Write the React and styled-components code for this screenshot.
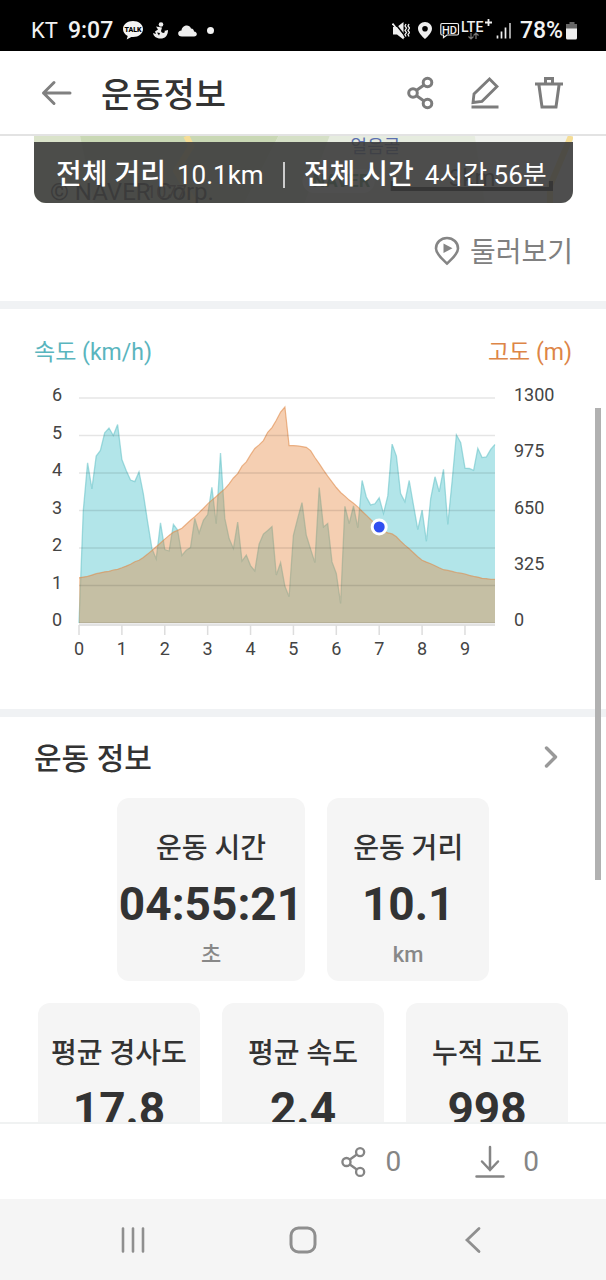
import React from 'react';
import styled, { createGlobalStyle } from 'styled-components';

const GlobalStyle = createGlobalStyle`
  * {
    box-sizing: border-box;
  }
  body {
    margin: 0;
    background: #fff;
    color: #333;
    font-family: Roboto, "Noto Sans CJK KR", sans-serif;
  }
  button {
    border: 0;
    padding: 0;
    background: none;
    color: inherit;
    font: inherit;
  }
  h1, h2, h3, p {
    margin: 0;
  }
  svg {
    display: block;
  }
`;

// one value for every 0.1 km
const speed = [
  0, 3, 4.27, 3.58, 4.45, 4.6, 5.07, 5.2, 5, 5.29,
  4.36, 4.07, 3.81, 3.77, 4.03, 3.45, 2.7, 1.99, 1.71, 2.67,
  1.96, 1.92, 2.63, 2.48, 1.8, 1.94, 2.01, 2.79, 2.4, 2.74,
  2.89, 3.62, 2.65, 4.53, 2.79, 2.25, 1.99, 2.69, 1.65, 1.81,
  1.53, 1.39, 2.1, 2.37, 2.47, 2.57, 1.28, 1.61, 0.98, 0.7,
  2.34, 2.79, 3.21, 2.34, 1.97, 1.61, 3.61, 2.56, 2.65, 1.63,
  1.32, 0.52, 3.11, 2.65, 3.12, 2.54, 3.8, 3.36, 3.15, 3.18,
  3.34, 2.92, 3.39, 4.77, 4.45, 3.45, 3.23, 3.8, 3.14, 2.49,
  3.01, 2.18, 3.32, 3.9, 3.5, 4.1, 2.63, 3.78, 5.02, 4.81,
  4.13, 4.12, 4.07, 4.66, 4.41, 4.43, 4.63, 4.76,
];

const altitude = [
  261, 265, 269, 277, 285, 290, 296, 298, 306, 310,
  319, 329, 340, 354, 363, 379, 398, 419, 440, 462,
  485, 506, 525, 535, 548, 571, 594, 615, 638, 663,
  688, 710, 731, 754, 775, 804, 838, 863, 906, 931,
  971, 1008, 1029, 1054, 1102, 1129, 1171, 1219, 1248, 1025,
  1025, 1023, 1019, 1015, 996, 956, 921, 883, 848, 815,
  783, 754, 733, 710, 692, 671, 646, 623, 598, 575,
  554, 529, 521, 515, 498, 473, 450, 429, 406, 383,
  363, 352, 342, 331, 319, 308, 304, 298, 292, 288,
  283, 275, 269, 265, 258, 256, 252, 252,
];

const LEFT = 45;
const RIGHT = 461;
const TOP = 14;
const BOTTOM = 239;
const KM = (RIGHT - LEFT) / 9.7;

const toPoints = (data, max) =>
  data
    .map((v, i) => `${(LEFT + i * 0.1 * KM).toFixed(1)},${(BOTTOM - (v / max) * (BOTTOM - TOP)).toFixed(1)}`)
    .join(' ');

const Chart = () => {
  const speedLine = toPoints(speed, 6);
  const altitudeLine = toPoints(altitude, 1300);
  const base = `${RIGHT},${BOTTOM} ${LEFT},${BOTTOM}`;
  const step = (BOTTOM - TOP) / 6;

  return (
    <ChartSvg viewBox="0 0 538 290" role="img" aria-label="속도, 고도">
      <polygon points={`${speedLine} ${base}`} fill="#65cbd3" fillOpacity="0.5" />
      <polyline points={speedLine} fill="none" stroke="#6cc5c9" strokeOpacity="0.6" strokeWidth="1.3" />
      <polygon points={`${altitudeLine} ${base}`} fill="#e58134" fillOpacity="0.38" />
      <polyline points={altitudeLine} fill="none" stroke="#e08a4a" strokeOpacity="0.6" strokeWidth="1.2" />
      {[0, 1, 2, 3, 4, 5, 6].map(n => (
        <g key={n}>
          <line x1={LEFT} x2={RIGHT} y1={BOTTOM - n * step} y2={BOTTOM - n * step} stroke="#000" strokeOpacity="0.1" strokeWidth="1.5" />
          <AxisText x="28" y={BOTTOM - n * step + 3} textAnchor="end">{n}</AxisText>
        </g>
      ))}
      <line x1={LEFT} x2={RIGHT} y1="241" y2="241" stroke="#e2e2e2" strokeWidth="2" />
      {[0, 1, 2, 3, 4, 5, 6, 7, 8, 9].map(n => (
        <g key={n}>
          <line x1={LEFT + n * KM} x2={LEFT + n * KM} y1="241" y2="251" stroke="#ddd" strokeWidth="1.5" />
          <AxisText x={LEFT + n * KM} y="271" textAnchor="middle">{n}</AxisText>
        </g>
      ))}
      {[0, 325, 650, 975, 1300].map((n, i) => (
        <AxisText key={n} x="480" y={BOTTOM - i * step * 1.5 + 3}>{n}</AxisText>
      ))}
      <circle cx={LEFT + 7 * KM} cy="143" r="8.5" fill="#fff" />
      <circle cx={LEFT + 7 * KM} cy="143" r="5.5" fill="#304ff0" />
    </ChartSvg>
  );
};

const ShareIcon = ({ w = 28, h = 34, sw = 3 }) => (
  <svg width={w} height={h} viewBox="0 0 28 34" fill="none" stroke="currentColor" strokeWidth={sw}>
    <circle cx="6" cy="17" r="4.3" />
    <circle cx="20.5" cy="6.5" r="4.3" />
    <circle cx="20.5" cy="27.5" r="4.3" />
    <path d="M9.600 14.300 17 9M9.600 19.700 17 25" />
  </svg>
);

const BackIcon = () => (
  <svg width="32" height="26" viewBox="0 0 32 26" fill="none" stroke="#808080" strokeWidth="3" strokeLinecap="round" strokeLinejoin="round">
    <path d="M2.500 13H29M13 2.500 2.500 13 13 23.500" />
  </svg>
);

const PencilIcon = () => (
  <svg width="28" height="34" viewBox="0 0 28 34" fill="none" stroke="currentColor" strokeWidth="2.8">
    <path d="M2 26.500 3 18 18.500 3 26 10.500 11 25.300ZM0.500 31H27.500" />
  </svg>
);

const TrashIcon = () => (
  <svg width="28" height="34" viewBox="0 0 28 34" fill="none" stroke="currentColor" strokeWidth="3">
    <path d="M0 8H28M3.800 8 7 31H21L24.200 8M10.500 7.500V2.500H17.500V7.500" />
  </svg>
);

const TalkIcon = () => (
  <svg width="20" height="19" viewBox="0 0 20 19">
    <path d="M10 0C4.400 0 0 3.500 0 8c0 3 1.900 5.500 4.700 6.900L3.700 18.500 8.300 15.900C14.700 16.800 20 13 20 8 20 3.500 15.600 0 10 0Z" fill="#f4f4f4" />
    <TalkText x="10" y="10.5" textAnchor="middle">TALK</TalkText>
  </svg>
);

const SwimIcon = () => (
  <svg width="15" height="17" viewBox="0 0 15 17" fill="#eee">
    <circle cx="8" cy="2.5" r="2.3" />
    <path d="M3 4.500 9 5.500 8 9C9 12 12 11 12 9.500L11 9 15 8C15 14 12 16.500 7.500 16.500 3 16.500 0.500 14 0 11L3 12 2 9.500 5 7.500Z" />
    <path d="M4 10.500 7 11 6 13.500Z" fill="#000" />
  </svg>
);

const CloudIcon = () => (
  <svg width="19" height="12" viewBox="0 0 19 12" fill="#eee">
    <path d="M4 11.500C-1 11.500-1 5.500 3.500 5.500 4 .5 11 -1.500 13 3.500 15 3.500 16 5 16 6.500 20 7 19.500 11.500 16 11.500Z" />
  </svg>
);

const MuteIcon = () => (
  <svg width="18" height="18" viewBox="0 0 18 18" fill="#eee">
    <path d="M1 5H5L11.500 0V17.500L5 12.500H1Z" />
    <path d="M2 0 13 14" stroke="#000" strokeWidth="1.5" />
    <path d="M0.500 1.500 12 16" stroke="#eee" strokeWidth="1.8" />
    <path d="M14 2l-1 2 1.500 2-1.500 2.500 1.500 2-1.500 2 1 2M17 2 16 4 17.500 6 16 8.500 17.500 10.500 16 12.500 17 14.500" fill="none" stroke="#eee" strokeWidth="1.3" />
  </svg>
);

const PinIcon = () => (
  <svg width="14" height="17" viewBox="0 0 14 17" fill="#eee">
    <path fillRule="evenodd" d="M7 0C3 0 0 3 0 6.700 0 11 7 17 7 17S14 11 14 6.700C14 3 11 0 7 0ZM7 4a2.800 2.800 0 1 1 0 5.600A2.800 2.800 0 0 1 7 4Z" />
  </svg>
);

const NetworkIcon = () => (
  <svg width="72" height="24" viewBox="0 0 72 24" fill="none" stroke="#eee" strokeWidth="1.2">
    <path d="M2 4.500H17Q18.500 4.500 18.500 6V14.500Q18.500 16 17 16H7L3.500 18.500V16H2Q.8 16 .8 14.500V6Q.8 4.500 2 4.500Z" />
    <StatusGlyph x="9.5" y="14.5" textAnchor="middle" $size={11}>HD</StatusGlyph>
    <StatusGlyph x="21" y="12.5" $size={14}>LTE</StatusGlyph>
    <path d="M48.500 0V7M45 3.500H52" strokeWidth="1.8" />
    <path d="M31 14V20M28.500 17.500 31 20 33.500 17.500M36 20V14M33.500 16.500 36 14 38.500 16.500" stroke="#777" />
    <path d="M57.500 16.500V19.500M61.500 12.500V19.500M65.500 8.500V19.500" strokeWidth="1.7" />
    <path d="M70 4V19.500" strokeWidth="1.7" stroke="#bbb" />
  </svg>
);

const BatteryIcon = () => (
  <svg width="12" height="18" viewBox="0 0 12 18">
    <path d="M3.500 0H8.500V2H11V8H0V2H3.500Z" fill="#666" />
    <path d="M0 6.500H11V16Q11 17.500 9.500 17.500H1.500Q0 17.500 0 16Z" fill="#eee" />
  </svg>
);

const TourIcon = () => (
  <svg width="26" height="30" viewBox="0 0 26 30" fill="none" stroke="#858585" strokeWidth="2.6">
    <path d="M13 27.500C9 23.500 2 18.500 2 12.500 2 6.500 6.800 2 13 2S24 6.500 24 12.500C24 18.500 17 23.500 13 27.500Z" />
    <path d="M9.500 7.500V17L18.500 12.200Z" fill="#858585" stroke="none" />
  </svg>
);

const ChevronIcon = () => (
  <svg width="14" height="24" viewBox="0 0 14 24" fill="none" stroke="#999" strokeWidth="3.4" strokeLinecap="round" strokeLinejoin="round">
    <path d="M2.500 3 11.500 12 2.500 21" />
  </svg>
);

const DownloadIcon = () => (
  <svg width="30" height="34" viewBox="0 0 30 34" fill="none" stroke="currentColor" strokeWidth="2.5" strokeLinecap="round">
    <path d="M15 2V24.500M7 16.500 15 25 23 16.500M1.500 31.500H28.500" />
  </svg>
);

const MapImage = () => (
  <MapSvg viewBox="0 0 538 67" preserveAspectRatio="xMinYMin slice" aria-hidden="true">
    <path d="M0 0H538V67H0Z" fill="#e6ecdf" />
    <path d="M0 0H46L60 67H0Z" fill="#dae3ca" />
    <path d="M46 0H244L210 67H60Z" fill="#c9d8b4" />
    <path d="M244 0H295L270 67H210Z" fill="#d5e0c6" />
    <path d="M440 0H538V67H450Z" fill="#f0f2ee" />
    <path d="M152 0 157 10 142 35 160 67M536 0 515 50V67" fill="none" stroke="#f5dd96" strokeWidth="6" />
    <MapText x="316" y="17" $size={18} $color="#5b6fae">얼음골</MapText>
    <MapText x="16" y="64" $size={24} $color="#333">© NAVER Corp.</MapText>
    <MapText x="112" y="62" $size={18} $color="#655">1077</MapText>
    <rect x="268" y="33" width="72" height="24" rx="12" fill="#fff" />
    <MapText x="278" y="51" $size={18} $color="#4a9060" $bold>NAVER</MapText>
    <MapText x="414" y="50" $size={24} $color="#333">3km</MapText>
    <path d="M358 45V53H516V45" fill="none" stroke="#000" strokeWidth="4" />
  </MapSvg>
);

const StatCard = ({ title, value, unit }) => (
  <Card>
    <CardTitle>{title}</CardTitle>
    <CardValue>{value}</CardValue>
    <CardUnit>{unit}</CardUnit>
  </Card>
);

const App = () => (
  <Phone>
    <GlobalStyle />
    <StatusBar>
      <StatusGroup $gap={10}>
        <Carrier>KT</Carrier>
        <Clock>9:07</Clock>
        <TalkIcon />
        <SwimIcon />
        <CloudIcon />
        <Dot />
      </StatusGroup>
      <StatusGroup $gap={8}>
        <MuteIcon />
        <PinIcon />
        <NetworkIcon />
        <BatteryGroup>
          <Clock>78%</Clock>
          <BatteryIcon />
        </BatteryGroup>
      </StatusGroup>
    </StatusBar>

    <Header>
      <IconButton aria-label="뒤로"><BackIcon /></IconButton>
      <PageTitle>운동정보</PageTitle>
      <HeaderActions>
        <IconButton aria-label="공유"><ShareIcon /></IconButton>
        <IconButton aria-label="편집"><PencilIcon /></IconButton>
        <IconButton aria-label="삭제"><TrashIcon /></IconButton>
      </HeaderActions>
    </Header>

    <Content>
      <MapBox>
        <MapImage />
        <Summary>
          <SummaryLabel>전체 거리</SummaryLabel>
          <SummaryValue>10.1km</SummaryValue>
          <SummaryLine />
          <SummaryLabel>전체 시간</SummaryLabel>
          <SummaryValue>4시간 56분</SummaryValue>
        </Summary>
      </MapBox>
      <TourRow>
        <TourButton>
          <TourIcon />
          <TourLabel>둘러보기</TourLabel>
        </TourButton>
      </TourRow>
      <Divider />

      <ChartSection>
        <ChartHead>
          <ChartName $color="#5ab5be">속도 (km/h)</ChartName>
          <ChartName $color="#dd8547">고도 (m)</ChartName>
        </ChartHead>
        <Chart />
      </ChartSection>
      <Divider />

      <InfoHead>
        <InfoTitle>운동 정보</InfoTitle>
        <IconButton aria-label="운동 정보 더보기"><ChevronIcon /></IconButton>
      </InfoHead>
      <Cards>
        <CardRow>
          <StatCard title="운동 시간" value="04:55:21" unit="초" />
          <StatCard title="운동 거리" value="10.1" unit="km" />
        </CardRow>
        <CardRow>
          <StatCard title="평균 경사도" value="17.8" />
          <StatCard title="평균 속도" value="2.4" />
          <StatCard title="누적 고도" value="998" />
        </CardRow>
      </Cards>
      <ScrollThumb />
    </Content>

    <ActionBar>
      <CountButton aria-label="공유 0">
        <ShareIcon w={28} h={32} sw={2.5} />
        0
      </CountButton>
      <CountButton aria-label="다운로드 0">
        <DownloadIcon />
        0
      </CountButton>
    </ActionBar>

    <NavBar>
      <IconButton aria-label="최근 앱">
        <svg width="28" height="28" viewBox="0 0 28 28" stroke="#8f8f8f" strokeWidth="2.6" strokeLinecap="round">
          <path d="M4 2.500V25.500M14 2.500V25.500M24 2.500V25.500" />
        </svg>
      </IconButton>
      <IconButton aria-label="홈">
        <svg width="28" height="28" viewBox="0 0 28 28" fill="none" stroke="#8f8f8f" strokeWidth="3">
          <rect x="2" y="2" width="24" height="24" rx="7.5" />
        </svg>
      </IconButton>
      <IconButton aria-label="이전">
        <svg width="28" height="30" viewBox="0 0 28 30" fill="none" stroke="#8f8f8f" strokeWidth="2.8" strokeLinecap="round">
          <path d="M20 3.500 8 15 20 26.500" />
        </svg>
      </IconButton>
    </NavBar>
  </Phone>
);

export default App;


const Phone = styled.div`
  display: flex;
  flex-direction: column;
  height: 100vh;
  overflow: hidden;
`;

const StatusBar = styled.div`
  display: flex;
  flex: none;
  align-items: center;
  justify-content: space-between;
  height: 51px;
  padding: 10px 28px 0 31px;
  background: #000;
  color: #f2f2f2;
`;

const StatusGroup = styled.div`
  display: flex;
  align-items: center;
  gap: ${props => props.$gap}px;
`;

const Carrier = styled.span`
  font-size: 22px;
`;

const Clock = styled.span`
  font-size: 23px;
  font-weight: 500;
`;

const BatteryGroup = styled.div`
  display: flex;
  align-items: center;
  gap: 3px;
`;

const Dot = styled.span`
  width: 7px;
  height: 7px;
  border-radius: 50%;
  background: #f2f2f2;
`;

const TalkText = styled.text`
  font-size: 7px;
  font-weight: 900;
  fill: #000;
`;

const StatusGlyph = styled.text`
  font-size: ${props => props.$size}px;
  font-weight: 500;
  fill: #eee;
  stroke: none;
`;

const Header = styled.header`
  display: flex;
  flex: none;
  align-items: center;
  height: 85px;
  padding: 0 43px 0 41px;
  border-bottom: 2px solid #e3e3e3;
`;

const IconButton = styled.button`
  color: #7c7c7c;
`;

const PageTitle = styled.h1`
  margin-left: 28px;
  padding-top: 4px;
  font-size: 34px;
  font-weight: 500;
  line-height: 50px;
`;

const HeaderActions = styled.div`
  display: flex;
  gap: 36px;
  margin-left: auto;
`;

const Content = styled.main`
  position: relative;
  flex: 1;
  min-height: 0;
  overflow: hidden;
`;

const MapBox = styled.div`
  position: relative;
  margin: 0 33px 0 34px;
  padding-top: 6px;
  border-radius: 0 0 12px 12px;
  overflow: hidden;
`;

const MapSvg = styled.svg`
  position: absolute;
  top: 0;
  left: 0;
  width: 100%;
  height: 100%;
`;

const Summary = styled.div`
  position: relative;
  display: flex;
  align-items: center;
  height: 61px;
  padding: 4px 22px 0;
  background: rgba(60, 60, 60, 0.9);
  color: #fff;
  line-height: 40px;
  white-space: nowrap;
`;

const SummaryLabel = styled.span`
  font-size: 28px;
  font-weight: 500;
`;

const SummaryValue = styled.span`
  margin-left: 11px;
  font-size: 26px;
`;

const SummaryLine = styled.span`
  flex: none;
  width: 2px;
  height: 26px;
  margin: 0 19px;
  background: #ccc;
`;

const MapText = styled.text`
  font-size: ${props => props.$size}px;
  font-weight: ${props => (props.$bold ? 700 : 400)};
  fill: ${props => props.$color};
`;

const TourRow = styled.div`
  display: flex;
  justify-content: flex-end;
  padding: 26px 33px 28px;
`;

const TourButton = styled.button`
  display: flex;
  align-items: center;
  gap: 10px;
  color: #808080;
  font-size: 28px;
  line-height: 40px;
`;

const TourLabel = styled.span`
  padding-top: 4px;
`;

const Divider = styled.div`
  height: 8px;
  background: #f0f2f4;
`;

const ChartSection = styled.section`
  padding: 28px 34px 35px;
`;

const ChartHead = styled.div`
  display: flex;
  justify-content: space-between;
  line-height: 32px;
  margin-bottom: 15px;
`;

const ChartName = styled.h3`
  color: ${props => props.$color};
  font-size: 23px;
  font-weight: 400;
`;

const ChartSvg = styled.svg`
  width: 100%;
  height: auto;
`;

const AxisText = styled.text`
  font-size: 18px;
  fill: #444;
`;

const InfoHead = styled.div`
  display: flex;
  align-items: center;
  justify-content: space-between;
  height: 81px;
  padding: 0 48px 2px 34px;
`;

const InfoTitle = styled.h2`
  padding-top: 4px;
  font-size: 30px;
  font-weight: 500;
  line-height: 44px;
`;

const Cards = styled.div`
  display: flex;
  flex-direction: column;
  gap: 22px;
`;

const CardRow = styled.div`
  display: flex;
  justify-content: center;
  gap: 22px;
`;

const Card = styled.article`
  min-width: 162px;
  padding: 32px 2px 11px;
  border-radius: 12px;
  background: #f5f5f5;
  text-align: center;
`;

const CardTitle = styled.h3`
  font-size: 28px;
  font-weight: 500;
  line-height: 38px;
`;

const CardValue = styled.p`
  font-size: 46px;
  font-weight: 700;
  line-height: 72px;
`;

const CardUnit = styled.p`
  min-height: 30px;
  color: #888;
  font-size: 22px;
  font-weight: 500;
  line-height: 30px;
`;

const ScrollThumb = styled.div`
  position: absolute;
  top: 272px;
  right: 5px;
  width: 6px;
  height: 472px;
  background: #b1b1b1;
`;

const ActionBar = styled.div`
  display: flex;
  flex: none;
  justify-content: flex-end;
  gap: 74px;
  height: 77px;
  padding-right: 67px;
  border-top: 2px solid #f0f2f2;
`;

const CountButton = styled.button`
  display: flex;
  align-items: center;
  gap: 18px;
  color: #858585;
  font-size: 28px;
`;

const NavBar = styled.nav`
  display: flex;
  flex: none;
  align-items: center;
  justify-content: space-between;
  height: 81px;
  padding: 0 119px;
  background: #f5f5f5;
`;
